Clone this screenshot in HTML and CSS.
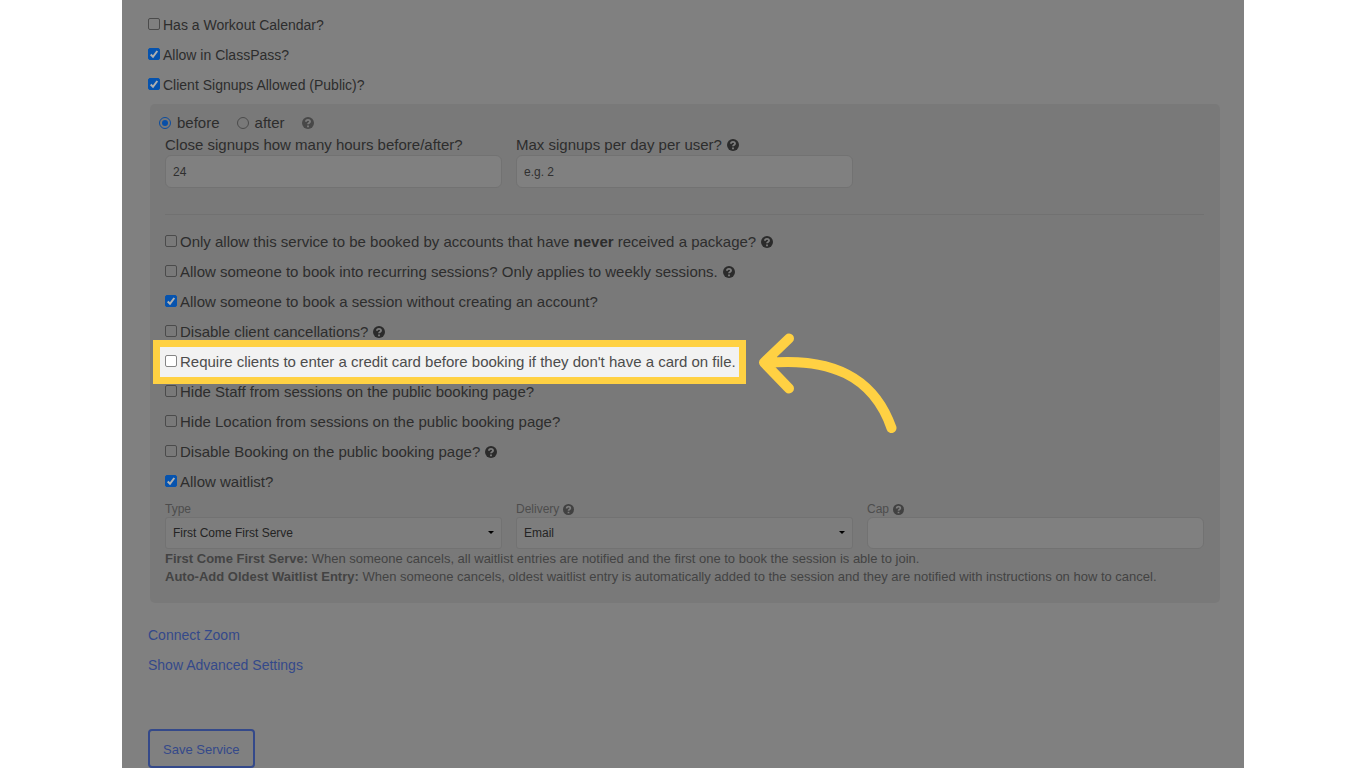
FILE: index.html
```html
<!DOCTYPE html>
<html lang="en">
<head>
<meta charset="utf-8">
<title>Service Settings</title>
<link rel="stylesheet" href="styles.css">
</head>
<body>
<svg class="symbols" aria-hidden="true">
  <symbol id="help" viewBox="0 0 16 16">
    <circle cx="8" cy="8" r="8" fill="currentColor"/>
    <path class="help-mark" d="M5.300 6.400C5.300 3 10.700 3.100 10.700 6.100C10.700 8 8 7.900 8 9.800M8 11.300V13.500"/>
  </symbol>
  <symbol id="tick" viewBox="0 0 12 12">
    <path class="tick-mark" d="M2.700 6.500L5 8.800L9.300 3"/>
  </symbol>
</svg>
<form class="page">
  <label class="check"><input type="checkbox"><span>Has a Workout Calendar?</span></label>
  <label class="check"><input type="checkbox" checked><svg class="tick"><use href="#tick"/></svg><span>Allow in ClassPass?</span></label>
  <label class="check"><input type="checkbox" checked><svg class="tick"><use href="#tick"/></svg><span>Client Signups Allowed (Public)?</span></label>

  <section class="panel">
    <div class="radios">
      <label><input type="radio" name="close" checked>before</label>
      <label><input type="radio" name="close">after</label>
      <svg class="help help-soft"><use href="#help"/></svg>
    </div>
    <div class="columns">
      <div class="field">
        <label for="hours">Close signups how many hours before/after?</label>
        <input id="hours" type="text" value="24">
      </div>
      <div class="field">
        <label for="max">Max signups per day per user? <svg class="help"><use href="#help"/></svg></label>
        <input id="max" type="text" placeholder="e.g. 2">
      </div>
    </div>
    <hr class="rule">
    <label class="check"><input type="checkbox"><span>Only allow this service to be booked by accounts that have <b>never</b> received a package?</span><svg class="help"><use href="#help"/></svg></label>
    <label class="check"><input type="checkbox"><span>Allow someone to book into recurring sessions? Only applies to weekly sessions.</span><svg class="help"><use href="#help"/></svg></label>
    <label class="check"><input type="checkbox" checked><svg class="tick"><use href="#tick"/></svg><span>Allow someone to book a session without creating an account?</span></label>
    <label class="check"><input type="checkbox"><span>Disable client cancellations?</span><svg class="help"><use href="#help"/></svg></label>
    <label class="check check-highlight"><input type="checkbox"><span>Require clients to enter a credit card before booking if they don't have a card on file.</span>
      <svg class="arrow" viewBox="0 0 140 102" aria-hidden="true"><path d="M31 5.500L6 29.500L31 55.500M8 30C71 24 115 42 133.500 95"/></svg>
    </label>
    <label class="check"><input type="checkbox"><span>Hide Staff from sessions on the public booking page?</span></label>
    <label class="check"><input type="checkbox"><span>Hide Location from sessions on the public booking page?</span></label>
    <label class="check"><input type="checkbox"><span>Disable Booking on the public booking page?</span><svg class="help"><use href="#help"/></svg></label>
    <label class="check"><input type="checkbox" checked><svg class="tick"><use href="#tick"/></svg><span>Allow waitlist?</span></label>
    <div class="columns columns-waitlist">
      <div class="field field-small">
        <label for="type">Type</label>
        <div class="select"><select id="type"><option>First Come First Serve</option><option>Auto-Add Oldest Waitlist Entry</option></select></div>
      </div>
      <div class="field field-small">
        <label for="delivery">Delivery <svg class="help"><use href="#help"/></svg></label>
        <div class="select"><select id="delivery"><option>Email</option></select></div>
      </div>
      <div class="field field-small">
        <label for="cap">Cap <svg class="help"><use href="#help"/></svg></label>
        <input id="cap" type="text">
      </div>
    </div>
    <div class="notes">
      <p><b>First Come First Serve:</b> When someone cancels, all waitlist entries are notified and the first one to book the session is able to join.</p>
      <p><b>Auto-Add Oldest Waitlist Entry:</b> When someone cancels, oldest waitlist entry is automatically added to the session and they are notified with instructions on how to cancel.</p>
    </div>
  </section>

  <nav class="links">
    <a href="#zoom">Connect Zoom</a>
    <a href="#advanced">Show Advanced Settings</a>
  </nav>
  <button class="save" type="button">Save Service</button>
</form>
</body>
</html>
```
FILE: styles.css
```css
* { box-sizing: border-box; }

body {
  margin: 0;
  padding: 0 122px;
  background: #fff;
  color: #2d2d2d;
  font: 14px/20px "Liberation Sans", Arial, sans-serif;
}

.symbols { position: absolute; width: 0; height: 0; }

.page {
  display: flex;
  flex-direction: column;
  align-items: flex-start;
  min-height: 100vh;
  padding: 10px 24px 0 26px;
  background: #808080;
}

.check {
  position: relative;
  display: flex;
  align-items: center;
  width: fit-content;
  height: 30px;
  gap: 3px;
}

.check .help { margin-left: 2px; }

.check input {
  appearance: none;
  width: 12px;
  height: 12px;
  margin: 0 0 2px;
  border: 1px solid #4b4b4b;
  border-radius: 2px;
}

.check input:checked {
  border-color: #0653ae;
  background: #0653ae;
}

.tick {
  position: absolute;
  left: 0;
  top: 8px;
  width: 12px;
  height: 12px;
  visibility: hidden;
  pointer-events: none;
}

.check input:checked + .tick { visibility: visible; }
.tick-mark { fill: none; stroke: #b0b0b0; stroke-width: 2; }

.help { width: 12px; height: 12px; color: #2b2b2b; }
.help-soft { color: #484848; }
.help-mark { fill: none; stroke: #7b7b7b; stroke-width: 2.5; }

.panel {
  align-self: stretch;
  margin-left: 2px;
  margin-top: 4px;
  padding: 9px 16px 17px 15px;
  border-radius: 5px;
  background: #797979;
  font-size: 15px;
}

.radios {
  display: flex;
  align-items: center;
  gap: 17px;
  height: 20px;
  margin: 0 0 2px -6px;
}

.radios label { display: flex; align-items: center; gap: 6px; }

.radios input {
  appearance: none;
  display: grid;
  place-items: center;
  width: 12px;
  height: 12px;
  margin: 0;
  border: 1px solid #4b4b4b;
  border-radius: 50%;
}

.radios input:checked { border-color: #0c4c9e; }

.radios input:checked::before {
  content: "";
  width: 6px;
  height: 6px;
  border-radius: 50%;
  background: #084fa8;
}

.columns {
  display: grid;
  grid-template-columns: repeat(3, 1fr);
  gap: 14px;
}

.columns-waitlist { margin-top: 4px; }

.field label { display: flex; align-items: center; gap: 5px; height: 20px; }

.field input, .field select {
  display: block;
  width: 100%;
  height: 33px;
  padding: 0 7px;
  border: 1px solid #727272;
  border-radius: 6px;
  background: #808080;
  color: #2f2f2f;
  font: 12px "Liberation Sans", Arial, sans-serif;
}

.field input::placeholder { color: #303030; opacity: 1; }

.field-small label { height: 16px; font-size: 12px; gap: 4px; color: #4d4d4d; }
.field-small .help { width: 11px; height: 11px; color: #414141; }
.field-small input, .field-small select { height: 32px; }
.field-small select { appearance: none; border-radius: 3px; background: #7d7d7d; color: #242424; }

.select { position: relative; }

.select::after {
  content: "";
  position: absolute;
  right: 8px;
  top: 14px;
  border: 3px solid transparent;
  border-top-color: #000;
  border-bottom: 0;
  pointer-events: none;
}

.rule { margin: 26px 0 12px; border: 0; border-top: 1px solid #717171; }

.check-highlight {
  z-index: 1;
  color: #4c4c4c;
}

.check-highlight::before {
  content: "";
  position: absolute;
  z-index: -1;
  inset: -7px -10px -7px -12px;
  border: 7px solid #ffd143;
  background: #f2f2f2;
}

.check-highlight input { border-color: #858585; background: #fff; }

.arrow {
  position: absolute;
  left: calc(100% + 22px);
  top: -14px;
  width: 140px;
  height: 102px;
  fill: none;
  stroke: #ffd143;
  stroke-width: 10;
  stroke-linecap: round;
  stroke-linejoin: round;
}

.notes { margin-top: 1px; color: #434343; font-size: 13px; line-height: 18px; }
.notes p { margin: 0; }

.links { display: flex; flex-direction: column; margin-top: 17px; line-height: 30px; }
.links a { color: #34498a; text-decoration: none; }

.save {
  height: 39px;
  margin-top: 49px;
  padding: 1px 13px 0;
  border: 2px solid #34498a;
  border-radius: 4px;
  background: transparent;
  color: #34498a;
  font: 13px "Liberation Sans", Arial, sans-serif;
}
```
